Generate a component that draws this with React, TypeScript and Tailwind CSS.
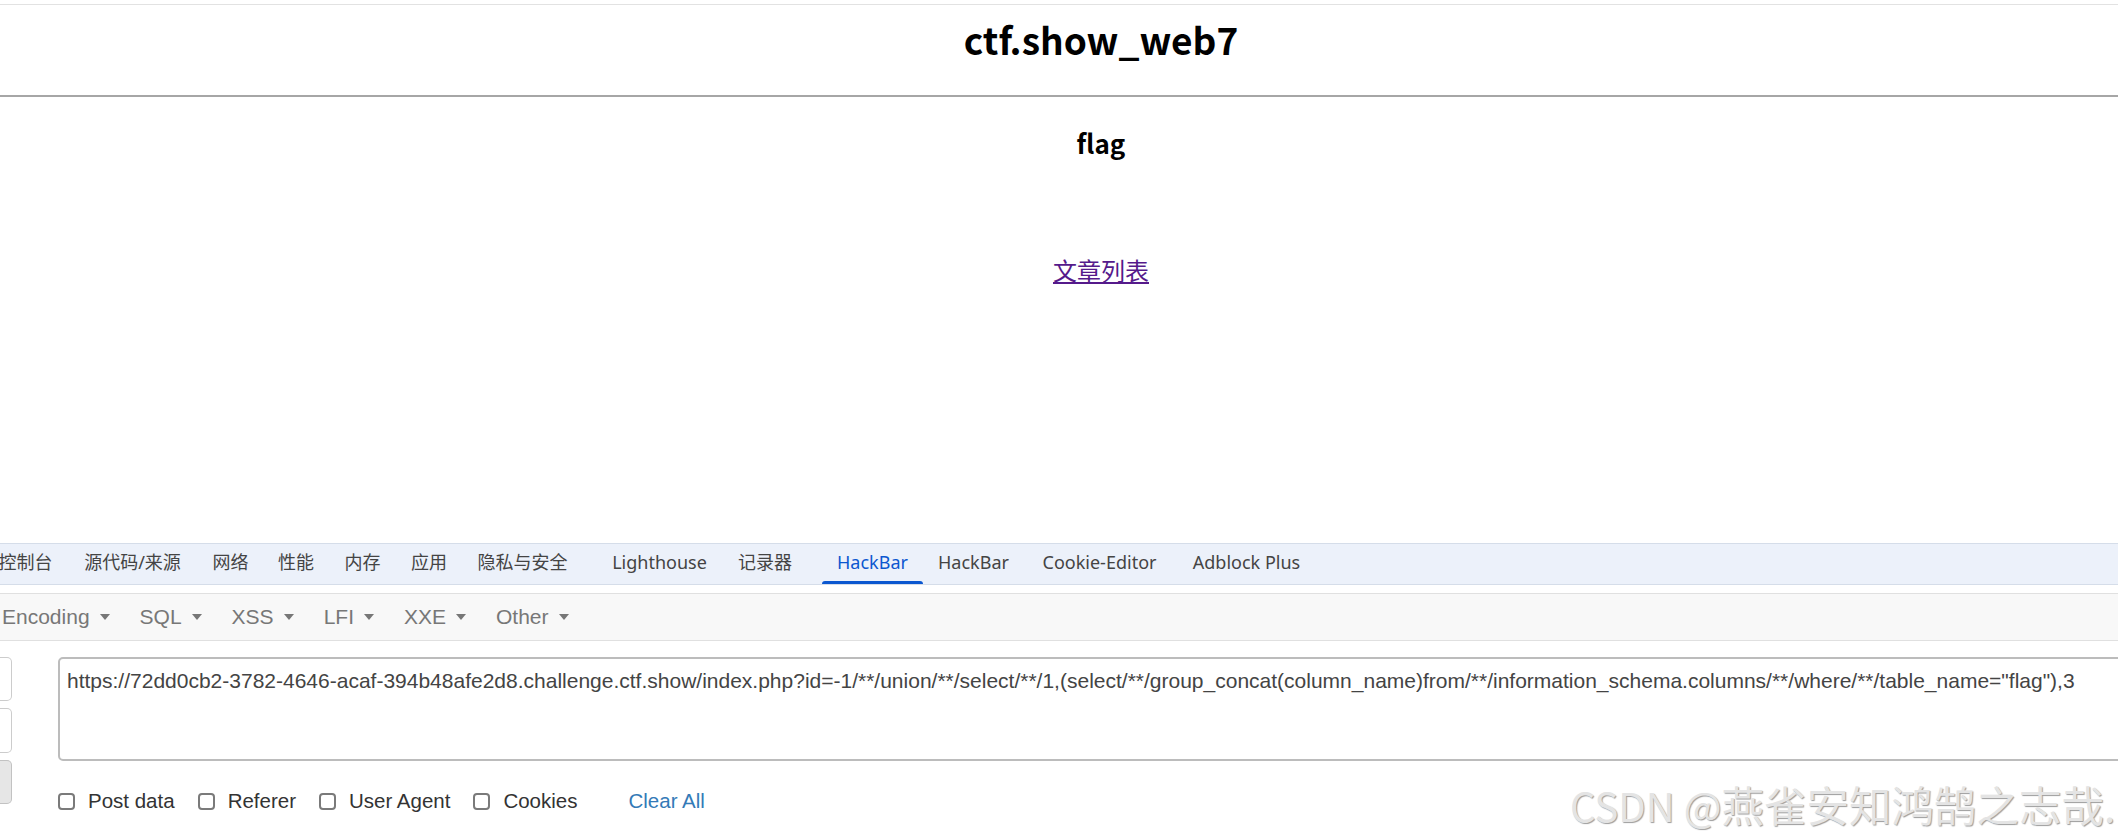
import React from 'react';

const tabs = [
  { label: '控制台', cls: 'w-[83px] -ml-[16px]' },
  { label: '源代码/来源', cls: 'w-[131px]' },
  { label: '网络', cls: 'w-[65px]' },
  { label: '性能', cls: 'w-[66px]' },
  { label: '内存', cls: 'w-[67px]' },
  { label: '应用', cls: 'w-[66px]' },
  { label: '隐私与安全', cls: 'w-[121px]' },
  { label: 'Lighthouse', cls: 'w-[125px] ml-[14px]' },
  { label: '记录器', cls: 'w-[86px]' },
  { label: 'HackBar', cls: 'w-[101px] ml-[14px]', active: true },
  { label: 'HackBar', cls: 'w-[101px]' },
  { label: 'Cookie-Editor', cls: 'w-[151px]' },
  { label: 'Adblock Plus', cls: 'w-[143px]' },
];

const menus = ['Encoding', 'SQL', 'XSS', 'LFI', 'XXE', 'Other'];

const checks = ['Post data', 'Referer', 'User Agent', 'Cookies'];

const url =
  'https://72dd0cb2-3782-4646-acaf-394b48afe2d8.challenge.ctf.show/index.php?id=-1/**/union/**/select/**/1,(select/**/group_concat(column_name)from/**/information_schema.columns/**/where/**/table_name="flag"),3';

export default function App() {
  return (
    <div className="relative h-[837px] w-full overflow-hidden bg-white">
      {/* page */}
      <div className="h-[543px] pt-[4px] font-['Noto_Sans_CJK_SC',sans-serif]">
        <div className="h-[93px] border-t border-b-2 border-t-[#e2e2e2] border-b-[#a6a6a6] pl-[84px] pt-[16px] text-center">
          <h1 className="text-[37px] font-bold leading-none text-black">ctf.show_web7</h1>
        </div>
        <div className="mt-[33px] pl-[84px] text-center text-[26px] font-bold leading-none text-black">flag</div>
        <div className="mt-[102px] pl-[84px] text-center text-[24px] leading-none">
          <a href="#" className="text-[#551a8b] underline">文章列表</a>
        </div>
      </div>

      {/* devtools tabs */}
      <div className="flex h-[42px] border-y border-[#d5dde9] bg-[#ecf1fa] font-['Noto_Sans','Noto_Sans_CJK_SC',sans-serif] text-[18px]">
        {tabs.map((t, i) => (
          <div key={i} className={`flex h-full shrink-0 flex-col ${t.cls}`}>
            <div
              className={`flex flex-1 items-center justify-center whitespace-nowrap ${
                t.active ? 'text-[#0b57d0]' : 'text-[#444]'
              }`}
            >
              {t.label}
            </div>
            <div className={`h-[3px] rounded-t-[3px] ${t.active ? 'bg-[#0b57d0]' : 'bg-transparent'}`} />
          </div>
        ))}
      </div>

      {/* hackbar toolbar */}
      <div className="mt-[8px] flex h-[48px] items-center border-y border-[#e0e0e0] bg-[#f8f8f8] font-['Liberation_Sans',Arial,sans-serif] text-[21px] text-[#777]">
        {menus.map((m, i) => (
          <div key={m} className={`flex items-center px-[15px] ${i === 0 ? '-ml-[13px]' : ''}`}>
            <span>{m}</span>
            <span className="ml-[10px] h-0 w-0 border-x-[5px] border-t-[6px] border-x-transparent border-t-[#777]" />
          </div>
        ))}
      </div>

      {/* hackbar body */}
      <div className="pt-[16px] font-['Liberation_Sans',Arial,sans-serif]">
        <div className="flex">
          <div className="flex w-[12px] shrink-0 flex-col gap-[7px]">
            <div className="h-[44px] rounded-r-[5px] border-y border-r border-[#cccccc] bg-white" />
            <div className="h-[45px] rounded-r-[5px] border-y border-r border-[#cccccc] bg-white" />
            <div className="h-[44px] rounded-r-[5px] border-y border-r border-[#c2c2c2] bg-[#e6e6e6]" />
          </div>
          <div className="ml-[46px] shrink-0">
            <textarea
              readOnly
              value={url}
              className="block h-[104px] w-[2100px] resize-none rounded-[5px] border-2 border-[#bcbcbc] bg-white px-[7px] pt-[7px] text-[21px] leading-[1.42857] text-[#444] outline-none"
            />
            <div className="mt-[32px] flex h-4 items-center text-[20.5px] text-[#333]">
              {checks.map((c) => (
                <label key={c} className="mr-[23px] flex items-center">
                  <span className="h-[17px] w-[17px] rounded-[4px] border-2 border-[#7a7a7a] bg-white" />
                  <span className="ml-[13px] whitespace-nowrap">{c}</span>
                </label>
              ))}
              <a href="#" className="ml-[28px] whitespace-nowrap text-[#337ab7]">Clear All</a>
            </div>
          </div>
        </div>
      </div>

      {/* watermark */}
      <div className="pointer-events-none absolute left-[1570px] top-[783px] whitespace-nowrap font-['Noto_Sans_CJK_SC',sans-serif] text-[40px] leading-none text-[#e4e4e4] [text-shadow:1px_1px_1px_#9c9c9c]">
        CSDN @<span className="text-[42.5px]">燕雀安知鸿鹄之志哉</span>.
      </div>
    </div>
  );
}
